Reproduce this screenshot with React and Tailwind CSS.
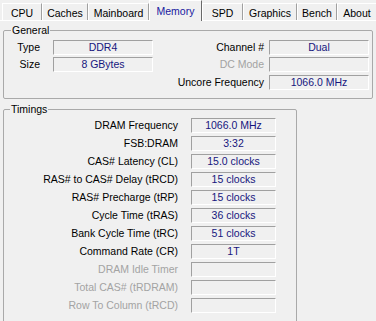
import React from 'react';

const tabs = [
  { name: 'CPU', w: 40 },
  { name: 'Caches', w: 46 },
  { name: 'Mainboard', w: 61 },
  { name: 'Memory', w: 53, active: true },
  { name: 'SPD', w: 41 },
  { name: 'Graphics', w: 54 },
  { name: 'Bench', w: 40 },
  { name: 'About', w: 40 },
];

const timings = [
  ['DRAM Frequency', '1066.0 MHz'],
  ['FSB:DRAM', '3:32'],
  ['CAS# Latency (CL)', '15.0 clocks'],
  ['RAS# to CAS# Delay (tRCD)', '15 clocks'],
  ['RAS# Precharge (tRP)', '15 clocks'],
  ['Cycle Time (tRAS)', '36 clocks'],
  ['Bank Cycle Time (tRC)', '51 clocks'],
  ['Command Rate (CR)', '1T'],
  ['DRAM Idle Timer', null],
  ['Total CAS# (tRDRAM)', null],
  ['Row To Column (tRCD)', null],
];

// sunken value box
const Field = ({ value, className = '' }) => (
  <div
    className={`h-[15px] shrink-0 border border-t-[#a0a0a0] border-l-[#a0a0a0] border-b-white border-r-white text-center leading-[13px] text-[#16167e] ${className}`}
  >
    {value}
  </div>
);

const Label = ({ children, disabled, className = '' }) => (
  <div className={`text-right leading-[15px] ${disabled ? 'text-[#a3a3a3]' : 'text-black'} ${className}`}>
    {children}
  </div>
);

export default function App() {
  return (
    <div
      className="w-[376px] h-[321px] overflow-hidden bg-[#f0f0f0] text-[10.5px] select-none"
      style={{ fontFamily: '"Liberation Sans", Arial, sans-serif' }}
    >
      {/* Tabs */}
      <div className="flex h-[20px] items-end pl-[2px]">
        {tabs.map((t) =>
          t.active ? (
            <div
              key={t.name}
              style={{ width: t.w }}
              className="relative z-10 -mb-px h-[21px] shrink-0 border-t border-l border-white border-r border-r-[#696969] bg-[#f0f0f0] pt-[4px] text-center leading-[12px] text-[#1818a0]"
            >
              {t.name}
            </div>
          ) : (
            <div
              key={t.name}
              style={{ width: t.w }}
              className="h-[17px] shrink-0 border-t border-l border-white border-r border-r-[#a0a0a0] pt-[3px] text-center leading-[12px] text-black"
            >
              {t.name}
            </div>
          )
        )}
      </div>

      {/* Tab body */}
      <div className="border-t border-white px-[3px]">
        {/* General */}
        <fieldset className="mt-[3px] w-[370px] rounded-[2px] border border-[#a9a9a9] pb-[8px] pr-[3px]">
          <legend className="ml-[7px] px-[1px] leading-[12px]">General</legend>
          <div className="flex flex-col pt-[4px]">
            <div className="flex items-center">
              <Label className="w-[36px]">Type</Label>
              <Field value="DDR4" className="ml-[13px] w-[100px]" />
              <Label className="flex-1">Channel #</Label>
              <Field value="Dual" className="ml-[5px] w-[100px]" />
            </div>
            <div className="mt-[2px] flex items-center">
              <Label className="w-[36px]">Size</Label>
              <Field value="8 GBytes" className="ml-[13px] w-[100px]" />
              <Label disabled className="flex-1">DC Mode</Label>
              <Field value="" className="ml-[5px] w-[100px]" />
            </div>
            <div className="mt-[3px] flex items-center">
              <Label className="flex-1">Uncore Frequency</Label>
              <Field value="1066.0 MHz" className="ml-[5px] w-[100px]" />
            </div>
          </div>
        </fieldset>

        {/* Timings */}
        <fieldset className="mt-[4px] w-[294px] rounded-[2px] border border-[#a9a9a9] pb-[10px]">
          <legend className="ml-[6px] px-[1px] leading-[12px]">Timings</legend>
          <div className="flex flex-col gap-[3px] pt-[3px]">
            {timings.map(([label, value]) => (
              <div key={label} className="flex items-center">
                <Label disabled={value === null} className="w-[174px]">
                  {label}
                </Label>
                <Field value={value || ''} className="ml-[13px] w-[85px]" />
              </div>
            ))}
          </div>
        </fieldset>
      </div>
    </div>
  );
}
